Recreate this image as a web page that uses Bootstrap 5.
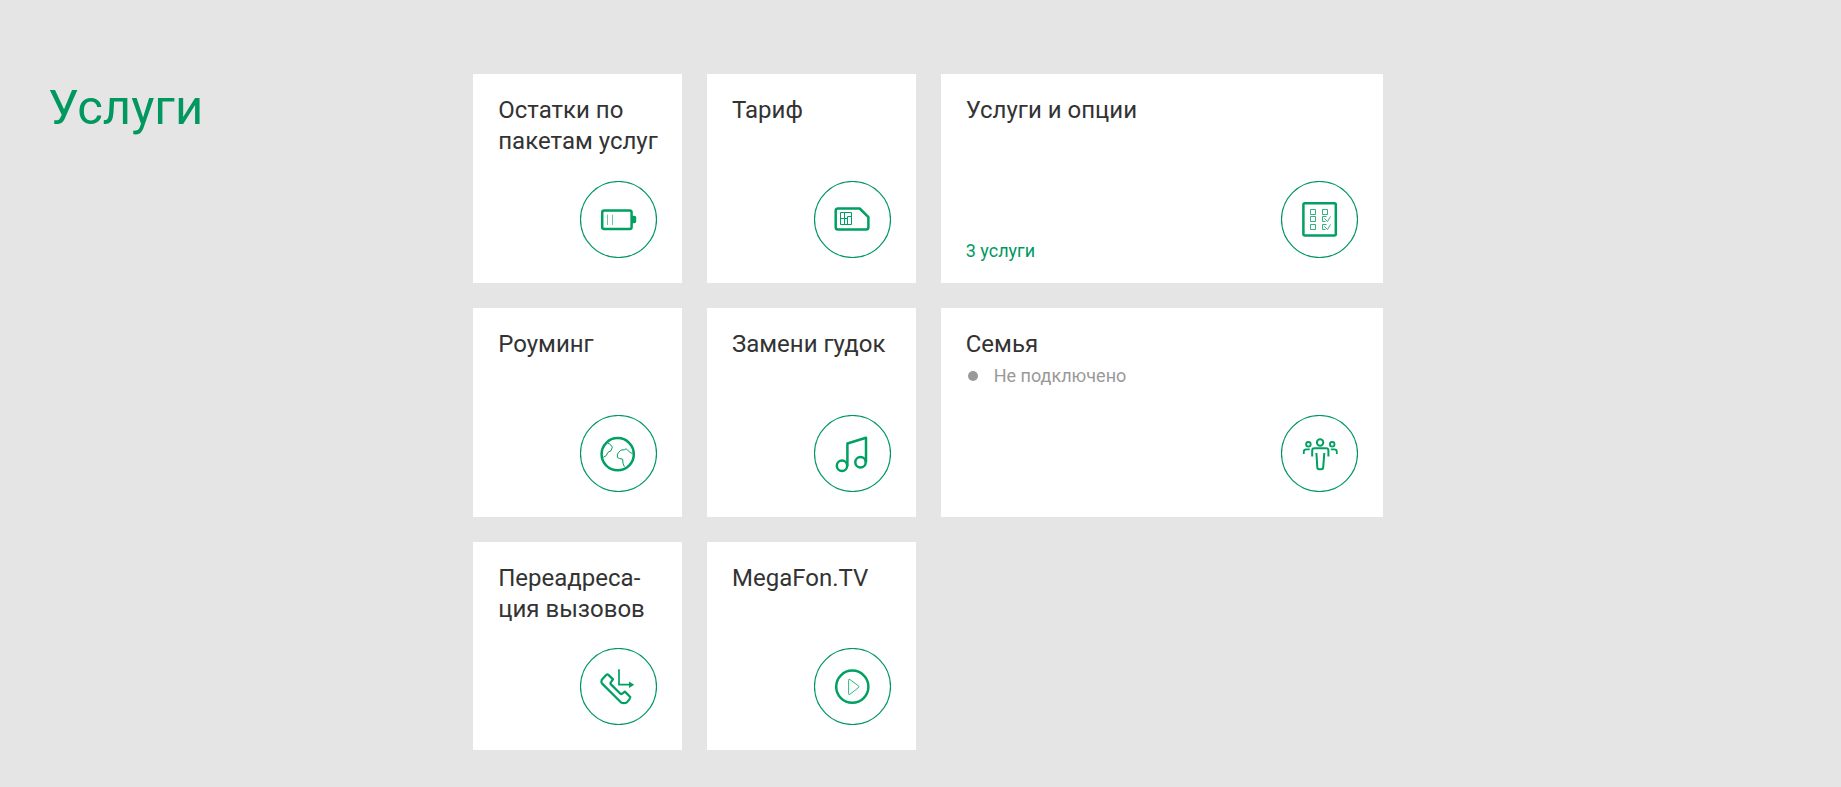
<!DOCTYPE html>
<html lang="ru">
<head>
<meta charset="utf-8">
<meta name="viewport" content="width=device-width, initial-scale=1">
<title>Услуги</title>
<link href="https://cdn.jsdelivr.net/npm/bootstrap@5.3.0/dist/css/bootstrap.min.css" rel="stylesheet">
<style>
  body { background: #e5e5e5; color: #333; font-family: Roboto, "Noto Sans", sans-serif; }
  .page { padding-top: 74px; padding-bottom: 37px; }
  .page-title { margin: 4px 0 24px 48px; font-size: 49px; line-height: 60px; font-weight: 400; color: #00985f; }
  .tiles-wrap { padding: 0 13px; }
  .tiles { display: grid; grid-template-columns: repeat(2, minmax(0, 1fr)); gap: 25px; max-width: 910px; }
  .tile { padding: 21px 20px 20px 25px; background: #fff; color: #333; text-decoration: none; }
  .tile-square { aspect-ratio: 1; }
  .tile-wide { grid-column: span 2; }
  .tile-title { margin: 0; font-size: 24px; line-height: 31px; font-weight: 400; }
  .tile-note { font-size: 18px; line-height: 24px; }
  .note-green { color: #00985f; }
  .note-off { margin-top: 4px; padding-left: 2px; gap: 16px; color: #999; }
  .dot { width: 10px; height: 10px; background: #999; }
  .tile-icon { width: 77px; height: 77px; margin: 0 5px 5px 0; fill: none; stroke: #00a062; stroke-width: 2.5; stroke-linejoin: round; }
  .tile-icon .ring { stroke: #00985f; stroke-width: 1.2; }
  .tile-icon .thin { stroke-width: 1; }
  .tile-icon .solid { fill: #00a062; stroke: none; }
  @media (min-width: 992px) { .tiles { grid-template-columns: repeat(4, minmax(0, 1fr)); } }
</style>
</head>
<body>
<main class="container-fluid page px-0">
  <div class="row g-0">
    <div class="col-12 col-lg-3">
      <h1 class="page-title">Услуги</h1>
    </div>
    <div class="col-12 col-lg-9 tiles-wrap">
      <div class="tiles">
        <a href="#" class="tile tile-square d-flex flex-column justify-content-between">
          <h2 class="tile-title">Остатки по пакетам услуг</h2>
          <svg class="tile-icon align-self-end" viewBox="0 0 77 77" aria-hidden="true">
            <circle class="ring" cx="38.5" cy="38.5" r="38"/>
            <rect x="22.2" y="29.4" width="29.4" height="18.5" rx="2"/>
            <path class="solid" d="M52 34.7h2.4q1.8 0 1.8 1.8v4q0 1.8-1.8 1.8H52z"/>
            <path class="thin" stroke-opacity=".6" d="M27.5 33.6V44M32.5 33.6V44"/>
          </svg>
        </a>
        <a href="#" class="tile tile-square d-flex flex-column justify-content-between">
          <h2 class="tile-title">Тариф</h2>
          <svg class="tile-icon align-self-end" viewBox="0 0 77 77" aria-hidden="true">
            <circle class="ring" cx="38.5" cy="38.5" r="38"/>
            <path d="M24 27.5h21.7l8.7 8.7v10q0 2.3-2.3 2.3H24q-2.3 0-2.3-2.3V29.8q0-2.3 2.3-2.3z"/>
            <path class="thin" d="M26.5 31.5h11v12h-11zM30.5 31.5v12M26.5 37.5h4M30.5 37.5h3M33.5 43.5v-8h4"/>
          </svg>
        </a>
        <a href="#" class="tile tile-wide d-flex justify-content-between">
          <div class="d-flex flex-column justify-content-between">
            <h2 class="tile-title">Услуги и опции</h2>
            <span class="tile-note note-green">3 услуги</span>
          </div>
          <svg class="tile-icon align-self-end" viewBox="0 0 77 77" aria-hidden="true">
            <circle class="ring" cx="38.5" cy="38.5" r="38"/>
            <rect x="22.4" y="22.2" width="32.4" height="32.4" rx="1.5"/>
            <path class="thin" stroke-opacity=".8" d="M29.5 28.5h5v5h-5zM41.5 28.5h5v5h-5zM29.5 35.5h5v5h-5zM29.5 43.5h5v5h-5zM45.5 35.5h-4v5h3M43.5 37.5l3 3 3-5M45.5 43.5h-4v5h3M43.5 45.5l3 3 3-5"/>
          </svg>
        </a>
        <a href="#" class="tile tile-square d-flex flex-column justify-content-between">
          <h2 class="tile-title">Роуминг</h2>
          <svg class="tile-icon align-self-end" viewBox="0 0 77 77" aria-hidden="true">
            <circle class="ring" cx="38.5" cy="38.5" r="38"/>
            <circle cx="37.7" cy="39.2" r="16.1"/>
            <path class="thin" d="M27.6 28.2l2 .6 2.8 3.3-1.4 3.6-3 1.6-1.8 3.4-3 1.6M52.6 38.6l-2.5-1.2-4-3.6-1.8 1-3.4.3-1.9 1.8-1.6 2.3v3.4l2.4 1 2.9.6.3 4 1.4 3.6"/>
          </svg>
        </a>
        <a href="#" class="tile tile-square d-flex flex-column justify-content-between">
          <h2 class="tile-title">Замени гудок</h2>
          <svg class="tile-icon align-self-end" viewBox="0 0 77 77" aria-hidden="true">
            <circle class="ring" cx="38.5" cy="38.5" r="38"/>
            <circle cx="28" cy="50.7" r="5.2"/>
            <circle cx="46.5" cy="47.2" r="5.2"/>
            <path d="M33.4 50.7V28.5l18.6-5.7v24.4"/>
          </svg>
        </a>
        <a href="#" class="tile tile-wide d-flex justify-content-between">
          <div>
            <h2 class="tile-title">Семья</h2>
            <div class="tile-note note-off d-flex align-items-center"><span class="dot rounded-circle"></span><span>Не подключено</span></div>
          </div>
          <svg class="tile-icon align-self-end" viewBox="0 0 77 77" aria-hidden="true">
            <circle class="ring" cx="38.5" cy="38.5" r="38"/>
            <g stroke-width="2">
              <circle cx="39.1" cy="27.5" r="3.2"/>
              <path d="M31.2 41.5v-6q0-2.2 2.2-2.2h11.8q2.2 0 2.2 2.2v6M35.4 38l.9 14.4q.1 1.8 1.8 1.8h2.3q1.7 0 1.8-1.8L43.3 38"/>
            </g>
            <g stroke-width="1.8">
              <circle cx="27.4" cy="29.3" r="2.3"/>
              <circle cx="51.2" cy="29.3" r="2.3"/>
              <path d="M22.8 39v-2.2q0-2.4 2.4-2.4h3.6M55.8 39v-2.2q0-2.4-2.4-2.4h-3.6"/>
            </g>
          </svg>
        </a>
        <a href="#" class="tile tile-square d-flex flex-column justify-content-between">
          <h2 class="tile-title">Переадреса&shy;ция вызовов</h2>
          <svg class="tile-icon align-self-end" viewBox="0 0 77 77" aria-hidden="true">
            <circle class="ring" cx="38.5" cy="38.5" r="38"/>
            <path stroke-width="2.2" d="M28.4 26.9l4.6 4.5-2.4 3.2q-.5.8.1 1.5l9.7 9.6q.7.6 1.5.1l3-2.2 5.4 5.4q-.3 2.8-3.6 5.5-3 1.3-5.6 0L21.9 35.4q-1-1.6-.1-3.7l4.4-4.8q1.2-.9 2.2 0z"/>
            <path stroke-width="1.7" stroke-linejoin="miter" d="M39 21.3v15.4h11"/>
            <path class="solid" d="M49 33.5l5.2 3.2-5.2 3.2z"/>
          </svg>
        </a>
        <a href="#" class="tile tile-square d-flex flex-column justify-content-between">
          <h2 class="tile-title">MegaFon.TV</h2>
          <svg class="tile-icon align-self-end" viewBox="0 0 77 77" aria-hidden="true">
            <circle class="ring" cx="38.5" cy="38.5" r="38"/>
            <circle cx="38.3" cy="38.7" r="16.1"/>
            <path stroke-width=".8" d="M34.6 32.2q0-1.6 1.3-.6l8.3 6q1.1 1.1 0 2.2l-8.3 6.5q-1.3 1-1.3-.6z"/>
          </svg>
        </a>
      </div>
    </div>
  </div>
</main>
<script src="https://cdn.jsdelivr.net/npm/bootstrap@5.3.0/dist/js/bootstrap.bundle.min.js"></script>
</body>
</html>
